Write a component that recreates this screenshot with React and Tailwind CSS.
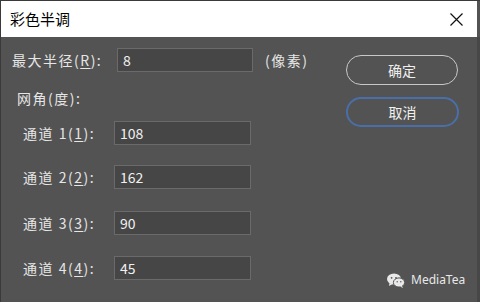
const font = { fontFamily: '"Noto Sans CJK SC", "Noto Sans", sans-serif' }

const Field = ({ value, className }) => (
    <div className={`h-[24px] bg-[#464646] border border-[#6a6a6a] pl-[5px] flex items-center text-[14px] text-[#f0f0f0] ${className}`}>
        {value}
    </div>
)

const Channel = ({ n, value, className }) => (
    <div className={`flex items-center ${className}`}>
        <span className="w-[113px] shrink-0 pl-[22px] text-[14px] text-[#e6e6e6] whitespace-nowrap tracking-[1.5px]">
            通道 {n}(<span className="underline underline-offset-2">{n}</span>):
        </span>
        <Field value={value} className="w-[137px]" />
    </div>
)

const WeChat = () => (
    <svg width="18" height="15" viewBox="0 0 18 15">
        <ellipse cx="7" cy="6" rx="7" ry="5.6" fill="#e8e8e8" />
        <path d="M2.5 10 L2 13 L5.5 11 Z" fill="#e8e8e8" />
        <ellipse cx="12" cy="9.5" rx="5.6" ry="4.6" fill="#e8e8e8" stroke="#535353" strokeWidth="1" />
        <path d="M15 13 L16 15 L13 13.5 Z" fill="#e8e8e8" />
        <circle cx="4.6" cy="4.8" r="0.9" fill="#535353" />
        <circle cx="9" cy="4.8" r="0.9" fill="#535353" />
        <circle cx="10.2" cy="8.8" r="0.7" fill="#535353" />
        <circle cx="13.8" cy="8.8" r="0.7" fill="#535353" />
    </svg>
)

const App = () => {
    return (
        <div style={font} className="w-[480px] h-[302px] bg-[#535353] border-l border-t border-[#3a3a3a] flex flex-col overflow-hidden">
            {/* Title bar */}
            <div className="h-[36px] bg-white mr-[3px] flex items-center justify-between pl-[9px] pr-[14px] shrink-0">
                <span className="text-[15px] text-black">彩色半调</span>
                <svg width="13" height="13" viewBox="0 0 13 13">
                    <path d="M0.5 0.5 L12.5 12.5 M12.5 0.5 L0.5 12.5" stroke="#111" strokeWidth="1.2" />
                </svg>
            </div>

            <div className="flex flex-1 relative">
                <div className="flex flex-col pt-[11px] w-[330px]">
                    <div className="flex items-center">
                        <span className="w-[116px] shrink-0 pl-[11px] text-[14px] text-[#e6e6e6] whitespace-nowrap tracking-[1.5px]">
                            最大半径(<span className="underline underline-offset-2">R</span>):
                        </span>
                        <Field value="8" className="w-[136px]" />
                        <span className="ml-[12px] text-[14px] text-[#e6e6e6] tracking-[1.5px]">(像素)</span>
                    </div>
                    <div className="mt-[16px] h-[20px] pl-[16px] flex items-center text-[14px] text-[#e6e6e6] tracking-[1.5px]">
                        网角(度):
                    </div>
                    <Channel n="1" value="108" className="mt-[13px]" />
                    <Channel n="2" value="162" className="mt-[20px]" />
                    <Channel n="3" value="90" className="mt-[22px]" />
                    <Channel n="4" value="45" className="mt-[21px]" />
                </div>

                <div className="flex flex-col pt-[18px] pl-[15px]">
                    <button className="w-[112px] h-[30px] rounded-full border-[1.5px] border-[#c8c8c8] text-[14px] text-[#f0f0f0]">
                        确定
                    </button>
                    <button className="mt-[12px] w-[113px] h-[30px] rounded-full border-2 border-[#4a6fa8] text-[14px] text-[#f0f0f0]">
                        取消
                    </button>
                    <div className="mt-auto mb-[13px] ml-[41px] flex items-center gap-[6px]">
                        <WeChat />
                        <span className="text-[12px] text-[#e8e8e8]" style={{ fontFamily: '"Noto Sans", sans-serif' }}>MediaTea</span>
                    </div>
                </div>

                <div className="w-[3px] bg-[#474747] ml-auto" />
            </div>
        </div>
    )
}

export default App
